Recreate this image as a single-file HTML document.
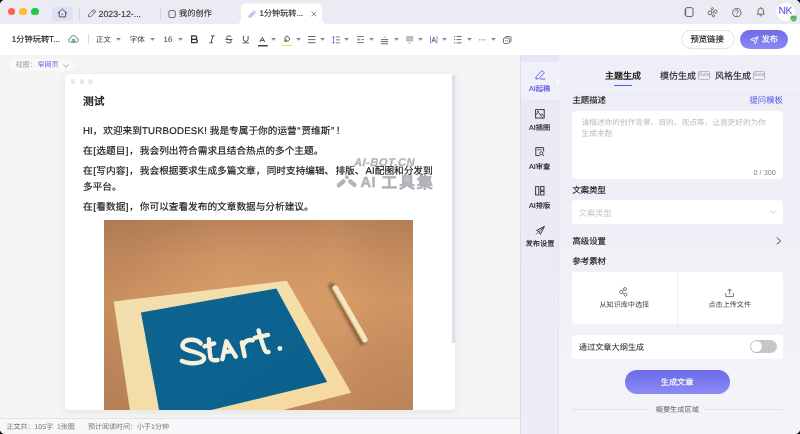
<!DOCTYPE html>
<html lang="zh-CN"><head><meta charset="utf-8">
<style>
*{box-sizing:border-box;margin:0;padding:0}
html,body{width:800px;height:434px;overflow:hidden;background:#000}
body{font-family:"Liberation Sans",sans-serif;color:#333;position:relative;text-rendering:geometricPrecision}
.a{position:absolute;white-space:nowrap;line-height:1}
svg{position:absolute;overflow:visible}
#win{position:absolute;left:0;top:0;width:800px;height:434px;border-radius:5px;overflow:hidden;background:#f4f4f5}
#title{position:absolute;left:0;top:0;width:800px;height:23.6px;background:#ebebf3}
#tool{position:absolute;left:0;top:23.6px;width:800px;height:31px;background:#fff}
#editor{position:absolute;left:0;top:55px;width:520px;height:363px;background:#f4f4f4}
#status{position:absolute;left:0;top:418px;width:520px;height:16px;background:#f7f7f9;border-top:1px solid #e2e2f0}
#side{position:absolute;left:520px;top:55px;width:39px;height:379px;background:linear-gradient(180deg,#e9e9f6,#ededf8);border-left:1px solid #dcdcf0;border-right:1px solid #e2e2f2}
#panel{position:absolute;left:559px;top:55px;width:241px;height:379px;background:linear-gradient(180deg,#eeeef8 0%,#efeff7 45%,#f4f4f8 100%)}
.card{position:absolute;background:#fff;border-radius:4px}
.arr{position:absolute;width:0;height:0;border-left:2.5px solid transparent;border-right:2.5px solid transparent;border-top:2.6px solid #8a8a8a}
</style></head>
<body>
<div id="win">
<!-- TITLE BAR -->
<div id="title">
  <div class="a" style="left:7.5px;top:7.5px;width:7.5px;height:7.5px;border-radius:50%;background:#fe5f57"></div>
  <div class="a" style="left:19.4px;top:7.5px;width:7.5px;height:7.5px;border-radius:50%;background:#febc2e"></div>
  <div class="a" style="left:31.2px;top:7.5px;width:7.5px;height:7.5px;border-radius:50%;background:#28c840"></div>
  <div class="a" style="left:52px;top:6.5px;width:21px;height:14px;border-radius:4px;background:#dfdff8"></div>
  <svg style="left:57px;top:8px" width="11" height="10" viewBox="0 0 11 10"><path d="M0.9 5.2 L5.4 1.1 L9.9 5.2 M2.2 4.1 V8.9 H8.6 V4.1" fill="none" stroke="#505050" stroke-width="0.95" stroke-linejoin="round" stroke-linecap="round"/><path d="M4.5 6.4 H6.3" stroke="#505050" stroke-width="0.8"/></svg>
  <div class="a" style="left:79px;top:8px;width:1px;height:11.5px;background:#d4d4dc"></div>
  <svg style="left:87px;top:9px" width="10" height="9" viewBox="0 0 10 9"><path d="M1.3 7.8 L1.6 5.6 L6.2 1 Q6.8 0.5 7.4 1 L8.4 2 Q8.9 2.6 8.4 3.2 L3.8 7.6 Z M5.4 1.9 L7.5 4" fill="none" stroke="#555" stroke-width="0.85" stroke-linejoin="round"/></svg>
  <div class="a" style="left:98.5px;top:9.6px;font-size:8.8px;color:#3a3a3a;-webkit-text-stroke:0.15px">2023-12-...</div>
  <div class="a" style="left:159.5px;top:8px;width:1px;height:11.5px;background:#d4d4dc"></div>
  <svg style="left:168px;top:10px" width="8" height="8" viewBox="0 0 8 8"><rect x="0.9" y="0.6" width="6.4" height="6.9" rx="1.3" fill="none" stroke="#555" stroke-width="0.85"/></svg>
  <div class="a" style="left:179px;top:9.5px;font-size:8.2px;color:#3a3a3a;-webkit-text-stroke:0.15px">我的创作</div>
  <!-- active tab -->
  <svg style="left:236px;top:3px" width="91" height="21" viewBox="0 0 91 21"><path d="M0 21 Q5 21 5 16 V5 Q5 0.5 9.5 0.5 H81.5 Q86 0.5 86 5 V16 Q86 21 91 21 Z" fill="#fff"/></svg>
  <svg style="left:248px;top:10px" width="9" height="8" viewBox="0 0 9 8"><path d="M0.6 7.4 L1 5.2 L5.4 0.9 Q6 0.4 6.6 0.9 L7.6 1.9 Q8.1 2.5 7.6 3.1 L3.2 7.2 Z" fill="#c4c4f2" stroke="#b8b8ee" stroke-width="0.5"/><path d="M4.6 1.8 L6.6 3.9" stroke="#fff" stroke-width="0.6"/></svg>
  <div class="a" style="left:259.5px;top:9.6px;font-size:8.1px;color:#2a2a2a;-webkit-text-stroke:0.15px">1分钟玩转...</div>
  <svg style="left:311px;top:11px" width="6" height="6" viewBox="0 0 6 6"><path d="M0.5 0.5 L5.3 5.3 M5.3 0.5 L0.5 5.3" stroke="#666" stroke-width="0.8"/></svg>
  <!-- right icons -->
  <svg style="left:683px;top:7px" width="11" height="11" viewBox="0 0 11 11"><rect x="2.6" y="0.6" width="7.4" height="9" rx="1.6" fill="none" stroke="#555" stroke-width="0.9"/><path d="M1.2 3 H3.2 M1.2 5.2 H3.2 M1.2 7.5 H3.2" stroke="#555" stroke-width="0.8"/></svg>
  <svg style="left:707px;top:6.5px" width="11" height="11" viewBox="0 0 11 11"><circle cx="3" cy="5.8" r="1.9" fill="none" stroke="#555" stroke-width="0.85"/><circle cx="8.5" cy="4.6" r="1.6" fill="none" stroke="#555" stroke-width="0.85"/><circle cx="5.4" cy="1.6" r="1" fill="none" stroke="#555" stroke-width="0.8"/><circle cx="6.5" cy="8.8" r="1.1" fill="none" stroke="#555" stroke-width="0.8"/><path d="M4.8 5.4 L6.9 4.9 M4.5 3.7 L5 2.5 M4.4 7.1 L5.6 8.1" stroke="#555" stroke-width="0.75"/></svg>
  <svg style="left:731.5px;top:7.6px" width="10" height="10" viewBox="0 0 10 10"><circle cx="4.8" cy="4.6" r="4.1" fill="none" stroke="#555" stroke-width="0.85"/><path d="M3.4 3.5 Q3.4 2.1 4.8 2.1 Q6.2 2.1 6.2 3.4 Q6.2 4.2 5.2 4.7 Q4.8 5 4.8 5.6" fill="none" stroke="#555" stroke-width="0.8"/><circle cx="4.8" cy="7" r="0.5" fill="#555"/></svg>
  <svg style="left:755.5px;top:7.3px" width="10" height="10" viewBox="0 0 10 10"><path d="M1.2 7.2 H8.4 L7.5 5.8 V4 Q7.5 1.2 4.8 1.2 Q2.1 1.2 2.1 4 V5.8 Z" fill="none" stroke="#555" stroke-width="0.85" stroke-linejoin="round"/><path d="M3.6 8.8 H6" stroke="#555" stroke-width="0.85"/><path d="M4.8 0.2 V1.2" stroke="#555" stroke-width="0.8"/></svg>
  <div class="a" style="left:776px;top:3px;width:18.5px;height:18px;border-radius:50%;background:#fff"></div>
  <div class="a" style="left:778.4px;top:6.6px;font-size:10.4px;color:#4f4fe2;letter-spacing:-0.3px">NK</div>
  <svg style="left:789.5px;top:14.6px" width="8" height="7" viewBox="0 0 8 7"><path d="M3.6 0.2 L6.9 1.1 V3.4 Q6.9 5.6 3.6 6.8 Q0.3 5.6 0.3 3.4 V1.1 Z" fill="#43b25c" stroke="#fff" stroke-width="0.5"/><path d="M2.2 3.5 L3.3 4.5 L5 2.6" fill="none" stroke="#d6f5dc" stroke-width="0.6"/></svg>
</div>
<!-- TOOLBAR -->
<div id="tool">
  <div class="a" style="left:11.8px;top:12.4px;font-size:8.2px;color:#222;-webkit-text-stroke:0.15px">1分钟玩转T...</div>
  <svg style="left:68px;top:11.4px" width="11" height="8" viewBox="0 0 11 8"><path d="M2.6 7.2 Q0.5 7.2 0.5 5.2 Q0.5 3.4 2.4 3.2 Q2.8 0.6 5.5 0.6 Q8.2 0.6 8.6 3.2 Q10.5 3.4 10.5 5.2 Q10.5 7.2 8.4 7.2 Z" fill="none" stroke="#666" stroke-width="0.85"/><circle cx="5.5" cy="5.6" r="1.9" fill="#3cb957"/><path d="M4.6 5.6 L5.3 6.2 L6.4 5" stroke="#fff" stroke-width="0.5" fill="none"/></svg>
  <div class="a" style="left:88px;top:10.8px;width:1px;height:10px;background:#dcdce8"></div>
  <div class="a" style="left:96px;top:12.6px;font-size:7.5px;color:#333">正文</div>
  <svg style="left:115.6px;top:14.3px" width="5" height="3" viewBox="0 0 5 3"><path d="M0 0 H5 L2.5 2.8 Z" fill="#8c8c8c"/></svg>
  <div class="a" style="left:129.7px;top:12.6px;font-size:7.5px;color:#333">字体</div>
  <svg style="left:149.7px;top:14.3px" width="5" height="3" viewBox="0 0 5 3"><path d="M0 0 H5 L2.5 2.8 Z" fill="#8c8c8c"/></svg>
  <div class="a" style="left:163.6px;top:12.6px;font-size:7.8px;color:#333">16</div>
  <svg style="left:178.0px;top:14.3px" width="5" height="3" viewBox="0 0 5 3"><path d="M0 0 H5 L2.5 2.8 Z" fill="#8c8c8c"/></svg>
  <svg style="left:190px;top:11.4px" width="9" height="9" viewBox="0 0 9 9"><path d="M1.6 0.9 H4.9 Q6.8 0.9 6.8 2.6 Q6.8 4.2 4.9 4.3 H1.6 Z M1.6 4.3 H5.3 Q7.4 4.3 7.4 6 Q7.4 7.7 5.3 7.7 H1.6 Z" fill="none" stroke="#333" stroke-width="1.25" stroke-linejoin="round"/></svg>
  <svg style="left:207.5px;top:11.4px" width="8" height="9" viewBox="0 0 8 9"><path d="M3 0.9 H6.6 M1.2 7.8 H4.8 M4.9 0.9 L3.1 7.8" fill="none" stroke="#444" stroke-width="0.95"/></svg>
  <svg style="left:224.5px;top:11.4px" width="8" height="9" viewBox="0 0 8 9"><path d="M6.4 2 Q5.8 0.9 3.9 0.9 Q1.5 0.9 1.5 2.6 Q1.5 3.6 3 4" fill="none" stroke="#444" stroke-width="0.95"/><path d="M4.6 5 Q6.6 5.6 6.6 6.4 Q6.6 7.9 4 7.9 Q1.8 7.9 1.1 6.7" fill="none" stroke="#444" stroke-width="0.95"/><path d="M0.4 4.5 H7.4" stroke="#444" stroke-width="0.9"/></svg>
  <svg style="left:241.5px;top:11.4px" width="8" height="9" viewBox="0 0 8 9"><path d="M1.4 0.8 V4.4 Q1.4 6.4 3.75 6.4 Q6.1 6.4 6.1 4.4 V0.8" fill="none" stroke="#444" stroke-width="0.95"/><path d="M0.6 7.9 H6.9" stroke="#444" stroke-width="0.95"/></svg>
  <svg style="left:258px;top:13.4px" width="10" height="10" viewBox="0 0 10 10"><path d="M1.9 5 L4.35 0.5 L6.8 5 M2.8 3.4 H5.9" fill="none" stroke="#333" stroke-width="0.85"/><rect x="0" y="8" width="9.8" height="1.5" fill="#444"/></svg>
  <svg style="left:271.2px;top:14.3px" width="5" height="3" viewBox="0 0 5 3"><path d="M0 0 H5 L2.5 2.8 Z" fill="#8c8c8c"/></svg>
  <svg style="left:283px;top:11.4px" width="8" height="8" viewBox="0 0 8 8"><path d="M1.9 6.3 L2.1 2.7 Q2.6 1.3 4.3 1 L6.6 3.5 Q6.6 5.2 5.4 5.8 Z" fill="none" stroke="#3a3a3a" stroke-width="0.9" stroke-linejoin="round"/><path d="M1.9 6.3 L3.6 4.4" stroke="#3a3a3a" stroke-width="0.6"/></svg>
  <div class="a" style="left:282.4px;top:21.3px;width:9.6px;height:1.5px;background:#f8da52"></div>
  <svg style="left:295.6px;top:14.3px" width="5" height="3" viewBox="0 0 5 3"><path d="M0 0 H5 L2.5 2.8 Z" fill="#8c8c8c"/></svg>
  <svg style="left:307.7px;top:12.7px" width="8" height="8" viewBox="0 0 8 8"><path d="M0 0.5 H7.5 M0 3.6 H7.5 M0 6.7 H7.5" stroke="#555" stroke-width="0.9"/></svg>
  <svg style="left:320.0px;top:14.3px" width="5" height="3" viewBox="0 0 5 3"><path d="M0 0 H5 L2.5 2.8 Z" fill="#8c8c8c"/></svg>
  <svg style="left:332px;top:12.4px" width="9" height="8" viewBox="0 0 9 8"><path d="M1.5 0.6 V7.2" stroke="#6d6de8" stroke-width="0.8"/><path d="M0.2 1.8 L1.5 0.3 L2.8 1.8 M0.2 6 L1.5 7.5 L2.8 6" fill="none" stroke="#6d6de8" stroke-width="0.8"/><path d="M4 0.9 H7.8 M4 3.8 H7.8 M4 6.8 H7.8" stroke="#555" stroke-width="0.75"/></svg>
  <svg style="left:344.4px;top:14.3px" width="5" height="3" viewBox="0 0 5 3"><path d="M0 0 H5 L2.5 2.8 Z" fill="#8c8c8c"/></svg>
  <svg style="left:357px;top:12.5px" width="8" height="8" viewBox="0 0 8 8"><path d="M0 0.6 H7 M4.3 3.6 H7 M0 6.6 H7" stroke="#555" stroke-width="0.8"/><path d="M0.2 3.6 H2.8 M1.5 2.3 L2.8 3.6 L1.5 4.9" fill="none" stroke="#6d6de8" stroke-width="0.85"/></svg>
  <svg style="left:368.7px;top:14.3px" width="5" height="3" viewBox="0 0 5 3"><path d="M0 0 H5 L2.5 2.8 Z" fill="#8c8c8c"/></svg>
  <svg style="left:381px;top:12px" width="8" height="9" viewBox="0 0 8 9"><path d="M2.8 1.6 L3.8 0.6 L4.8 1.6" fill="none" stroke="#6d6de8" stroke-width="0.7"/><path d="M0 3.6 H7 M0 5.6 H7 M0 7.8 H7" stroke="#555" stroke-width="0.9"/></svg>
  <svg style="left:393.5px;top:14.3px" width="5" height="3" viewBox="0 0 5 3"><path d="M0 0 H5 L2.5 2.8 Z" fill="#8c8c8c"/></svg>
  <svg style="left:405.5px;top:12px" width="8" height="9" viewBox="0 0 8 9"><rect x="0" y="0" width="7.2" height="5.4" fill="#b8b8b8"/><path d="M0 1.8 H7.2 M0 3.6 H7.2" stroke="#d8d8d8" stroke-width="0.5"/><path d="M2.6 6.6 L3.6 7.6 L4.6 6.6" fill="none" stroke="#6d6de8" stroke-width="0.7"/></svg>
  <svg style="left:417.5px;top:14.3px" width="5" height="3" viewBox="0 0 5 3"><path d="M0 0 H5 L2.5 2.8 Z" fill="#8c8c8c"/></svg>
  <svg style="left:430px;top:12.3px" width="8" height="8" viewBox="0 0 8 8"><path d="M0.5 0 V7.5 M7 0 V7.5" stroke="#8080ea" stroke-width="0.9"/><path d="M1.8 6.6 L3.75 1 L5.7 6.6 M2.5 4.6 H5" fill="none" stroke="#555" stroke-width="0.8"/></svg>
  <svg style="left:442.2px;top:14.3px" width="5" height="3" viewBox="0 0 5 3"><path d="M0 0 H5 L2.5 2.8 Z" fill="#8c8c8c"/></svg>
  <svg style="left:454px;top:12.5px" width="8" height="8" viewBox="0 0 8 8"><path d="M0 0.5 H1.2 M0 3.6 H1.2 M0 6.8 H1.2 M2.6 0.5 H7.5 M2.6 3.6 H7.5 M2.6 6.8 H7.5" stroke="#555" stroke-width="0.9"/></svg>
  <svg style="left:466.9px;top:14.3px" width="5" height="3" viewBox="0 0 5 3"><path d="M0 0 H5 L2.5 2.8 Z" fill="#8c8c8c"/></svg>
  <svg style="left:479px;top:15.6px" width="7" height="2" viewBox="0 0 7 2"><circle cx="0.8" cy="0.8" r="0.6" fill="#555"/><circle cx="3.3" cy="0.8" r="0.6" fill="#555"/><circle cx="5.8" cy="0.8" r="0.6" fill="#555"/></svg>
  <svg style="left:490.6px;top:14.3px" width="5" height="3" viewBox="0 0 5 3"><path d="M0 0 H5 L2.5 2.8 Z" fill="#8c8c8c"/></svg>
  <svg style="left:503px;top:12.4px" width="9" height="8" viewBox="0 0 9 8"><rect x="2.2" y="0.5" width="5.9" height="5.4" rx="1" fill="none" stroke="#555" stroke-width="0.8"/><rect x="0.5" y="2" width="5.9" height="5.4" rx="1" fill="#fff" stroke="#555" stroke-width="0.8"/><path d="M1.8 4.8 H5" stroke="#555" stroke-width="0.6"/></svg>
  <div class="a" style="left:681px;top:6.7px;width:54px;height:19.2px;border-radius:10px;border:1px solid #e2e2e6;background:#fff"></div>
  <div class="a" style="left:690.5px;top:11.8px;font-size:8.3px;color:#222;-webkit-text-stroke:0.15px">预览链接</div>
  <div class="a" style="left:740.3px;top:6.7px;width:48px;height:19.2px;border-radius:10px;background:linear-gradient(180deg,#6b6be9,#8b8bf4)"></div>
  <svg style="left:750px;top:12px" width="9" height="9" viewBox="0 0 9 9"><path d="M0.6 3.6 L8 0.8 L5.4 8 L4 4.8 Z M4 4.8 L8 0.8" fill="none" stroke="#fff" stroke-width="0.85" stroke-linejoin="round"/></svg>
  <div class="a" style="left:761.5px;top:11.8px;font-size:8.3px;color:#fff;-webkit-text-stroke:0.15px">发布</div>
</div>
<!-- EDITOR -->
<div id="editor">
  <div class="a" style="left:9.4px;top:3.5px;width:65.6px;height:12px;border-radius:6px;background:#f9f9fa"></div>
  <div class="a" style="left:15.6px;top:7px;font-size:7px;color:#999">视图：</div>
  <div class="a" style="left:37.5px;top:7px;font-size:7px;color:#5b5be6">窄网页</div>
  <svg style="left:62.5px;top:8.6px" width="6" height="4" viewBox="0 0 6 4"><path d="M0.4 0.5 L2.9 3.2 L5.4 0.5" fill="none" stroke="#888" stroke-width="0.7"/></svg>
  <div class="card" style="left:65px;top:18.5px;width:390px;height:336px;box-shadow:0 2px 8px rgba(0,0,0,0.07);overflow:hidden">
    <div class="a" style="left:5.7px;top:5.8px;width:4.6px;height:4.6px;border-radius:50%;background:#e8e8e8"></div>
    <div class="a" style="left:14.5px;top:5.8px;width:4.6px;height:4.6px;border-radius:50%;background:#e8e8e8"></div>
    <div class="a" style="left:23.2px;top:5.8px;width:4.6px;height:4.6px;border-radius:50%;background:#e8e8e8"></div>
    <div class="a" style="left:18px;top:23.2px;font-size:10.7px;font-weight:bold;color:#1e1e1e">测试</div>
    <div class="a" style="left:18px;top:53.5px;font-size:9.66px;color:#141414;-webkit-text-stroke:0.15px #141414">HI<span style="margin-right:1px">，</span>欢迎来到<span style="letter-spacing:0.24px">TURBODESK!</span> 我是专属于你的运营<span style="margin:0 1px 0 0.5px">“</span>贾维斯<span style="margin:0 1.6px 0 0.5px">”</span>！</div>
    <div class="a" style="left:18px;top:73.5px;font-size:9.66px;color:#141414;-webkit-text-stroke:0.15px #141414">在<span style="margin:0 0.5px">[</span>选题目<span style="margin:0 0.5px">]</span><span style="margin-right:1.2px">，</span>我会列出符合需求且结合热点的多个主题。</div>
    <div class="a" style="left:18px;top:93.5px;font-size:9.66px;color:#141414;-webkit-text-stroke:0.15px #141414">在<span style="margin:0 0.5px">[</span>写内容<span style="margin:0 0.5px">]</span><span style="margin-right:1.2px">，</span>我会根据要求生成多篇文章<span style="margin-right:1.3px">，</span>同时支持编辑<span style="margin:0 1.2px 0 0">、</span>排版<span style="margin:0 1.2px 0 0">、</span>AI配图和分发到</div>
    <div class="a" style="left:18px;top:109.1px;font-size:9.66px;color:#141414;-webkit-text-stroke:0.15px #141414">多平台。</div>
    <div class="a" style="left:18px;top:129px;font-size:9.66px;color:#141414;-webkit-text-stroke:0.15px #141414">在<span style="margin:0 0.5px">[</span>看数据<span style="margin:0 0.5px">]</span><span style="margin-right:1.2px">，</span>你可以查看发布的文章数据与分析建议。</div>
    <div class="a" style="left:39px;top:146px;width:309px;height:192px;overflow:hidden">
<svg style="left:0;top:0" width="309" height="192" viewBox="0 0 309 192">
<defs><filter id="blur" x="-50%" y="-50%" width="200%" height="200%"><feGaussianBlur stdDeviation="1.6"/></filter>
<linearGradient id="wood" x1="0" y1="0" x2="0" y2="1">
<stop offset="0" stop-color="#b8825a"/><stop offset="0.2" stop-color="#c99062"/><stop offset="0.42" stop-color="#d49a66"/><stop offset="0.65" stop-color="#cb9162"/><stop offset="1" stop-color="#bf875a"/>
</linearGradient>
<linearGradient id="side" x1="0" y1="0" x2="1" y2="0"><stop offset="0" stop-color="#6a3a20" stop-opacity="0.12"/><stop offset="0.4" stop-color="#6a3a20" stop-opacity="0"/><stop offset="0.75" stop-color="#e0a870" stop-opacity="0.12"/><stop offset="1" stop-color="#6a3a20" stop-opacity="0.05"/></linearGradient>
<radialGradient id="glow" cx="0.5" cy="0.38" r="0.45"><stop offset="0" stop-color="#dca06a" stop-opacity="0.55"/><stop offset="1" stop-color="#dca06a" stop-opacity="0"/></radialGradient>
<linearGradient id="paper" x1="0" y1="0" x2="1" y2="1"><stop offset="0" stop-color="#f2e0b0"/><stop offset="1" stop-color="#f6da9e"/></linearGradient>
<linearGradient id="blue" x1="0" y1="0" x2="1" y2="1"><stop offset="0" stop-color="#0e6592"/><stop offset="1" stop-color="#0b608c"/></linearGradient>
</defs>
<rect width="309" height="192" fill="url(#wood)"/>
<rect width="309" height="192" fill="url(#side)"/><rect width="309" height="192" fill="url(#glow)"/>
<path d="M227.5 66 L258 122" stroke="#5e3a22" stroke-width="6.5" stroke-linecap="round" opacity="0.55" filter="url(#blur)"/>
<path d="M9.7 81.6 L182.8 60.8 L247.2 172.7 L150.0 197.5 L27.0 197.5 Z" fill="url(#paper)"/>
<path d="M36.9 92.4 L172.3 68.5 L223.2 162.1 L76.0 197.5 L56.5 197.5 Z" fill="url(#blue)"/>
<g fill="none" stroke="#f7f0dc" stroke-width="4.4" stroke-linecap="round" stroke-linejoin="round">
<path d="M96.7 123.4 C93.0 119.0 82.0 118.0 79.0 123.5 C76.0 129.5 86.0 130.5 92.0 132.5 C100.0 135.0 103.0 138.5 97.0 142.0 C91.0 144.5 82.0 143.0 77.8 141.0"/><path d="M104.9 119.1 C105.5 126.5 105.5 132.5 106.6 138.0 C107.5 140.3 110.5 140.5 113.6 140.0 M100.5 126.3 L110.2 123.4"/><path d="M118.4 139.2 L122.4 121.3 L131.8 136.7 M120.4 132.2 L126.9 131.2"/><path d="M137.8 122.3 L140.7 136.2 M138.6 126.0 C140.5 121.5 144.0 119.1 148.7 120.3"/><path d="M 154.6 110.4 C 156.5 117.5 159.0 125.5 161.0 130.5 C 161.8 132.0 163.0 132.3 164.5 132.0 M 150.6 117.9 L 164.0 114.9"/>
</g>
<circle cx="175.9" cy="128.5" r="2.4" fill="#f7f0dc"/>
<path d="M231.3 68.2 L260.6 119.5" stroke="#f4e6bf" stroke-width="5.8" stroke-linecap="round"/><path d="M229.4 69.8 L258.4 120.6" stroke="#c9ab76" stroke-width="1.4" stroke-linecap="round" opacity="0.8"/>
</svg></div>
  </div>
  
  <div class="a" style="left:354px;top:102.6px;font-size:11.2px;font-weight:bold;font-style:italic;color:#b2b2ba;mix-blend-mode:multiply;letter-spacing:0.45px;-webkit-text-stroke:0.3px #b2b2ba">AI-BOT.CN</div>
  <svg style="left:336px;top:119.5px;mix-blend-mode:multiply" width="21" height="14" viewBox="0 0 21 14"><circle cx="10.9" cy="2.2" r="2" fill="#b2b2ba"/><path d="M3 10.2 L7.4 6.4 M14.2 6.4 L18.4 9.8" stroke="#b2b2ba" stroke-width="4.4" stroke-linecap="round"/></svg>
  <div class="a" style="left:360.6px;top:120.2px;font-size:14.6px;font-weight:bold;color:#b2b2ba;mix-blend-mode:multiply;-webkit-text-stroke:0.5px #b2b2ba;letter-spacing:0.4px">AI<span style="font-size:15.6px;letter-spacing:2.2px;margin-left:5.4px;position:relative;top:0.9px;-webkit-text-stroke:0.4px #b2b2ba">工具集</span></div>
  <div class="a" style="left:452px;top:19.5px;width:3px;height:268px;background:#dedef3"></div>
</div>
<div id="status">
  <div class="a" style="left:6.4px;top:4.6px;font-size:7px;color:#777">正文共：105字&nbsp;&nbsp;1张图</div>
  <div class="a" style="left:88px;top:4.6px;font-size:7px;color:#777">预计阅读时间：小于1分钟</div>
</div>
<div id="side">
  <div class="a" style="left:0;top:0;width:38px;height:45px;background:#f0f0fb"></div><div class="a" style="left:0;top:0;width:38px;height:6.5px;background:#e5e5f6"></div>
  <svg style="left:13.5px;top:14.8px" width="11" height="10" viewBox="0 0 11 10"><path d="M0.8 9 L1.3 6.4 L6.4 1.2 Q7.1 0.6 7.8 1.2 L8.8 2.2 Q9.4 2.9 8.8 3.6 L3.6 8.6 Z" fill="none" stroke="#5c5ce2" stroke-width="0.95" stroke-linejoin="round"/><path d="M5.4 9 H9.8" stroke="#5c5ce2" stroke-width="0.95" stroke-linecap="round"/></svg>
  <div class="a" style="left:8px;top:30.4px;font-size:7.2px;color:#5555e0;-webkit-text-stroke:0.15px">AI起稿</div>
  <svg style="left:35px;top:23px" width="4" height="8" viewBox="0 0 4 8"><path d="M4 0 Q0.3 1.2 0.3 4 Q0.3 6.8 4 8 Z" fill="#fafafe"/></svg>
  <svg style="left:14px;top:53.6px" width="10" height="10" viewBox="0 0 10 10"><rect x="0.6" y="0.6" width="8.6" height="8.4" fill="none" stroke="#333" stroke-width="0.95"/><path d="M0.8 5.6 L3.4 3.4 L7.6 8.6 M5 6.2 L6.6 4.8 L9 6.8" fill="none" stroke="#333" stroke-width="0.9"/><circle cx="3" cy="2.6" r="0.8" fill="#333"/></svg>
  <div class="a" style="left:8px;top:69.2px;font-size:7.2px;color:#222;-webkit-text-stroke:0.15px">AI插图</div>
  <svg style="left:14px;top:92.4px" width="10" height="10" viewBox="0 0 10 10"><path d="M4.6 8.6 H0.8 V0.6 H8.6 V4.4" fill="none" stroke="#333" stroke-width="0.95"/><path d="M2.2 2.8 H6.8" stroke="#333" stroke-width="0.8"/><circle cx="6.4" cy="6.4" r="1.6" fill="none" stroke="#333" stroke-width="0.9"/><path d="M7.6 7.6 L9 9" stroke="#333" stroke-width="0.9"/></svg>
  <div class="a" style="left:8px;top:107.9px;font-size:7.2px;color:#222;-webkit-text-stroke:0.15px">AI审查</div>
  <svg style="left:14px;top:131px" width="10" height="10" viewBox="0 0 10 10"><rect x="0.6" y="0.6" width="3.2" height="8.4" fill="none" stroke="#333" stroke-width="0.95"/><rect x="5.6" y="0.6" width="3.4" height="3.6" fill="none" stroke="#333" stroke-width="0.95"/><rect x="5.6" y="5.4" width="3.4" height="3.6" fill="none" stroke="#333" stroke-width="0.95"/></svg>
  <div class="a" style="left:8px;top:147px;font-size:7.2px;color:#222;-webkit-text-stroke:0.15px">AI排版</div>
  <svg style="left:14.5px;top:170.5px" width="9" height="9" viewBox="0 0 9 9"><path d="M8.4 0.5 L0.6 4.4 L3.2 5.6 L4.4 8.4 Z" fill="none" stroke="#333" stroke-width="0.95" stroke-linejoin="round"/><path d="M8.4 0.5 L3.2 5.6" stroke="#333" stroke-width="0.9"/><path d="M0.4 8.2 L2.2 6.4" stroke="#333" stroke-width="0.9"/></svg>
  <div class="a" style="left:4.6px;top:184.7px;font-size:7.2px;color:#222;-webkit-text-stroke:0.15px">发布设置</div>
</div>
<div id="panel">
  <div class="a" style="left:46px;top:16.6px;font-size:9px;font-weight:bold;color:#222">主题生成</div>
  <div class="a" style="left:54.8px;top:29.8px;width:18px;height:1.5px;border-radius:1px;background:#5757ee"></div>
  <div class="a" style="left:101px;top:16.6px;font-size:9px;color:#2a2a2a;-webkit-text-stroke:0.15px">模仿生成</div>
  <div class="a" style="left:138.5px;top:16.3px;width:12.5px;height:8.4px;border:0.75px solid #b8b8c6;border-radius:1.5px"></div>
  <div class="a" style="left:140px;top:18.3px;font-size:5.1px;color:#9a9aa6">Beta</div>
  <div class="a" style="left:156px;top:16.6px;font-size:9px;color:#2a2a2a;-webkit-text-stroke:0.15px">风格生成</div>
  <div class="a" style="left:193.5px;top:16.3px;width:12.5px;height:8.4px;border:0.75px solid #b8b8c6;border-radius:1.5px"></div>
  <div class="a" style="left:195px;top:18.3px;font-size:5.1px;color:#9a9aa6">Beta</div>
  <div class="a" style="left:14px;top:34.2px;width:227px;height:0.8px;background:#f7f7fa"></div>
  <div class="a" style="left:13.5px;top:41px;font-size:8.4px;color:#1a1a1a;-webkit-text-stroke:0.15px">主题描述</div>
  <div class="a" style="left:190.5px;top:41px;font-size:8.4px;color:#5555e6">提问模板</div>
  <div class="card" style="left:13px;top:55.6px;width:210.6px;height:68.4px">
    <div class="a" style="left:9.5px;top:7.9px;font-size:7.7px;color:#bbb;line-height:10.9px">请描述你的创作背景、目的、观点等，让我更好的为你<br>生成主题</div>
    <div class="a" style="left:181.5px;top:58.6px;font-size:7.3px;color:#888">0 / 300</div>
  </div>
  <div class="a" style="left:13.5px;top:130.8px;font-size:8.4px;color:#1a1a1a;-webkit-text-stroke:0.15px">文案类型</div>
  <div class="card" style="left:13px;top:145.3px;width:210.6px;height:23.5px">
    <div class="a" style="left:6.6px;top:8.8px;font-size:8.3px;color:#c8c8c8">文案类型</div>
    <svg style="left:197.6px;top:10.2px" width="7" height="5" viewBox="0 0 7 5"><path d="M0.5 0.6 L3.3 3.6 L6.1 0.6" fill="none" stroke="#bbb" stroke-width="0.8"/></svg>
  </div>
  <div class="a" style="left:13.5px;top:181.5px;font-size:8.4px;color:#1a1a1a;-webkit-text-stroke:0.15px">高级设置</div>
  <svg style="left:216.5px;top:182px" width="6" height="8" viewBox="0 0 6 8"><path d="M0.8 0.6 L4.6 3.9 L0.8 7.2" fill="none" stroke="#333" stroke-width="0.9"/></svg>
  <div class="a" style="left:13.5px;top:202.2px;font-size:8.4px;color:#1a1a1a;-webkit-text-stroke:0.15px">参考素材</div>
  <div class="card" style="left:13px;top:217.2px;width:210.6px;height:52.2px">
    <div class="a" style="left:104.8px;top:0;width:0.8px;height:52.2px;background:#eeeef2"></div>
    <svg style="left:47px;top:14.5px" width="10" height="10" viewBox="0 0 10 10"><circle cx="2.3" cy="5" r="1.6" fill="none" stroke="#555" stroke-width="0.75"/><circle cx="6" cy="2" r="1.5" fill="none" stroke="#555" stroke-width="0.75"/><circle cx="6.6" cy="7.6" r="1.5" fill="none" stroke="#555" stroke-width="0.75"/><path d="M3.6 4 L4.7 2.8 M3.8 5.8 L5.2 7" stroke="#555" stroke-width="0.7"/></svg>
    <div class="a" style="left:27.5px;top:29.4px;font-size:7.1px;color:#444">从知识库中选择</div>
    <svg style="left:153px;top:15.5px" width="10" height="10" viewBox="0 0 10 10"><path d="M4.6 6.4 V1 M2.6 3 L4.6 0.9 L6.6 3" fill="none" stroke="#555" stroke-width="0.8"/><path d="M0.8 5 V8.6 H8.4 V5" fill="none" stroke="#555" stroke-width="0.8"/></svg>
    <div class="a" style="left:136.5px;top:29.4px;font-size:7.1px;color:#444">点击上传文件</div>
  </div>
  <div class="card" style="left:13px;top:279.6px;width:210.6px;height:24.2px">
    <div class="a" style="left:6.8px;top:9.4px;font-size:8.2px;color:#1a1a1a">通过文章大纲生成</div>
    <div class="a" style="left:178px;top:5.6px;width:26.8px;height:13.2px;border-radius:7px;background:#c6c6c8"></div>
    <div class="a" style="left:179.2px;top:6.8px;width:10.8px;height:10.8px;border-radius:50%;background:#fff;box-shadow:0 0.5px 1px rgba(0,0,0,0.2)"></div>
  </div>
  <div class="a" style="left:66px;top:315.4px;width:105px;height:23.5px;border-radius:12px;background:linear-gradient(180deg,#6a6ae8,#8b8bf6)"></div>
  <div class="a" style="left:101.7px;top:323.6px;font-size:8.2px;color:#fff;-webkit-text-stroke:0.15px">生成文章</div>
  <div class="a" style="left:13px;top:354.4px;width:78px;height:0.7px;background:#e4e4ec"></div>
  <div class="a" style="left:145px;top:354.4px;width:78.6px;height:0.7px;background:#e4e4ec"></div>
  <div class="a" style="left:96.7px;top:351.2px;font-size:7.2px;color:#666">概要生成区域</div>
</div>
</div>
</body></html>
